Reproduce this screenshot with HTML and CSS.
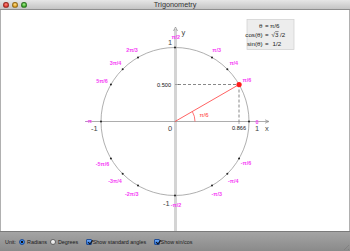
FILE: index.html
```html
<!DOCTYPE html>
<html>
<head>
<meta charset="utf-8">
<link rel="stylesheet" href="styles.css">
</head>
<body>
<div class="window">
  <div class="titlebar">
    <div class="lights">
      <span class="light red"></span>
      <span class="light yellow"></span>
      <span class="light green"></span>
    </div>
    <div class="title">Trigonometry</div>
  </div>
  <div class="canvas">
    <svg class="plot" width="350" height="221" viewBox="0 10 350 221">
      <rect x="0" y="10" width="350" height="221" fill="#fff"/>
      <line x1="0.5" y1="10" x2="0.5" y2="231" stroke="#b0b0b0"/>
      <line x1="349.5" y1="10" x2="349.5" y2="231" stroke="#b0b0b0"/>
      <!-- y axis -->
      <rect x="174" y="29" width="3" height="202" fill="#d4d4d4"/>
      <path d="M175.5 27 L173.5 31 M175.5 27 L177.5 31" stroke="#777" stroke-width="0.6" fill="none"/>
      <!-- x axis -->
      <line x1="85" y1="121.5" x2="268" y2="121.5" stroke="#8a8a8a" stroke-width="0.7"/>
      <path d="M269 121.5 L265 119.8 M269 121.5 L265 123.2" stroke="#777" stroke-width="0.6" fill="none"/>
      <!-- circle -->
      <circle cx="175" cy="121.5" r="74" fill="none" stroke="#9a9a9a" stroke-width="0.8"/>
      <!-- ticks -->
      <line x1="175" y1="84.5" x2="179" y2="84.5" stroke="#777" stroke-width="0.6"/>
      <line x1="239" y1="121.5" x2="239" y2="124" stroke="#777" stroke-width="0.6"/>
      <!-- dashed projection -->
      <line x1="178" y1="84.5" x2="239" y2="84.5" stroke="#555" stroke-width="0.7" stroke-dasharray="3 2"/>
      <line x1="239" y1="84.5" x2="239" y2="121.5" stroke="#555" stroke-width="0.7" stroke-dasharray="3 2"/>
      <!-- angle line and arc -->
      <line x1="175" y1="121.5" x2="239.09" y2="84.5" stroke="#ff5050" stroke-width="0.9"/>
      <path d="M195 121.5 A20 20 0 0 0 192.32 111.5" fill="none" stroke="#ff5050" stroke-width="0.8"/>
      <text class="redlbl" x="204" y="117">π/6</text>
      <!-- dots -->
      <g fill="#222">
        <circle cx="249" cy="121.5" r="1"/>
        <circle cx="227.33" cy="69.17" r="1"/>
        <circle cx="212" cy="57.41" r="1"/>
        <circle cx="175" cy="47.5" r="1"/>
        <circle cx="138" cy="57.41" r="1"/>
        <circle cx="122.67" cy="69.17" r="1"/>
        <circle cx="110.91" cy="84.5" r="1"/>
        <circle cx="101" cy="121.5" r="1"/>
        <circle cx="110.91" cy="158.5" r="1"/>
        <circle cx="122.67" cy="173.83" r="1"/>
        <circle cx="138" cy="185.59" r="1"/>
        <circle cx="175" cy="195.5" r="1"/>
        <circle cx="212" cy="185.59" r="1"/>
        <circle cx="227.33" cy="173.83" r="1"/>
        <circle cx="239.09" cy="158.5" r="1"/>
      </g>
      <circle cx="239.09" cy="84.5" r="2.6" fill="#ff1a1a"/>
      <!-- axis labels -->
      <text class="axlbl" x="168" y="44.5">1</text>
      <text class="axlbl" x="181.5" y="35">y</text>
      <text class="axlbl" x="91" y="130.5">-1</text>
      <text class="axlbl" x="168" y="130.5">0</text>
      <text class="axlbl" x="255" y="130.5">1</text>
      <text class="axlbl" x="265" y="130.5">x</text>
      <text class="axlbl" x="163" y="206">-1</text>
      <text class="numlbl" x="239" y="129.5">0.866</text>
      <text class="numlbl" x="164" y="86.5">0.500</text>
      <!-- angle labels -->
      <g class="mag">
        <text x="246.9" y="80">π/6</text>
        <text x="233.7" y="63">π/4</text>
        <text x="216.6" y="50">π/3</text>
        <text x="175.8" y="37">π/2</text>
        <text x="132" y="49.5">2π/3</text>
        <text x="115.5" y="63">3π/4</text>
        <text x="102" y="80.5">5π/6</text>
        <text x="89" y="121">-π</text>
        <text x="102.5" y="163.8">-5π/6</text>
        <text x="115" y="181">-3π/4</text>
        <text x="131.7" y="194">-2π/3</text>
        <text x="176" y="205">-π/2</text>
        <text x="216.7" y="194">-π/3</text>
        <text x="233.3" y="181">-π/4</text>
        <text x="246" y="163.3">-π/6</text>
        <text x="257" y="121.5">0</text>
      </g>
      <!-- info box -->
      <rect x="247" y="19.5" width="47" height="30" fill="#ededed" stroke="#cfcfcf" stroke-width="0.7"/>
      <g class="info">
        <text class="r" x="262.5" y="28.3">θ</text>
        <text x="265" y="28.3">=</text>
        <text x="270" y="28.3">π/6</text>
        <text class="r" x="262.5" y="37">cos(θ)</text>
        <text x="265" y="37">=</text>
        <text x="271.5" y="37">√3 /2</text>
        <text class="r" x="262.5" y="45.8">sin(θ)</text>
        <text x="265" y="45.8">=</text>
        <text x="272.5" y="45.8">1/2</text>
      </g>
      <line x1="275.2" y1="31.6" x2="278.6" y2="31.6" stroke="#222" stroke-width="0.5"/>
    </svg>
  </div>
  <div class="statusbar">
    <span class="lbl">Unit:</span>
    <span class="radio on"></span><span class="lbl">Radians</span>
    <span class="radio"></span><span class="lbl">Degrees</span>
    <span class="check"></span><span class="lbl">Show standard angles</span>
    <span class="check"></span><span class="lbl">Show sin/cos</span>
    <span class="grip"></span>
  </div>
</div>
</body>
</html>
```
FILE: styles.css
```css
* { box-sizing: border-box; }
html, body { margin: 0; padding: 0; background: #fff; }
body { width: 350px; height: 251px; overflow: hidden; font-family: "Liberation Sans", Arial, sans-serif; }
.window { width: 350px; height: 251px; display: flex; flex-direction: column; }
.titlebar {
  height: 10px; flex: none; position: relative;
  background: linear-gradient(#e6e6e6, #c4c4c4);
  border-bottom: 1px solid #8e8e8e;
  display: flex; align-items: center; justify-content: center;
}
.lights { position: absolute; left: 3px; top: 2px; display: flex; gap: 3px; }
.light { width: 6px; height: 6px; border-radius: 50%; display: block; border: 0.5px solid rgba(0,0,0,0.35); }
.light.red { background: radial-gradient(circle at 50% 35%, #ff8a80, #e0382e 70%); }
.light.yellow { background: radial-gradient(circle at 50% 35%, #ffe08a, #dc9b1c 70%); }
.light.green { background: radial-gradient(circle at 50% 35%, #a6f08c, #3aa829 70%); }
.title { font-size: 7.3px; color: #333; line-height: 10px; padding-top: 1px; }
.canvas { flex: none; height: 221px; }
.plot { display: block; }
.plot text { font-family: "Liberation Sans", Arial, sans-serif; }
.axlbl { font-size: 7.5px; fill: #444; }
.numlbl { font-size: 5.6px; fill: #111; text-anchor: middle; }
.redlbl { font-size: 6px; fill: #ff3030; text-anchor: middle; }
.mag text { font-size: 5.4px; font-weight: bold; fill: #f53cf5; text-anchor: middle; dominant-baseline: central; }
.info text { font-size: 6.2px; fill: #222; }
.info text.r { text-anchor: end; }
.statusbar {
  flex: 1; position: relative;
  background: linear-gradient(#a4a4a4, #8a8a8a);
  border-top: 1px solid #7a7a7a;
  display: flex; align-items: center; padding-left: 5px; padding-top: 1px;
  font-size: 5.4px; color: #1a1a1a;
}
.lbl { margin-right: 2px; white-space: nowrap; }
.radio {
  width: 6px; height: 6px; border-radius: 50%; margin: 0 2px 0 1px;
  background: linear-gradient(#fff, #ddd); border: 0.5px solid #666; display: inline-block; flex: none;
}
.radio.on { background: radial-gradient(circle, #111 0 1.2px, #3d8ef0 1.5px, #1a5fc8 100%); border-color: #1e4e9a; }
.check {
  width: 5.5px; height: 5.5px; margin: 0 1px 0 6px; flex: none;
  background: linear-gradient(#6aa7f5, #2a6ed8); border: 0.5px solid #234f96; border-radius: 1px; position: relative;
}
.check::after {
  content: ""; position: absolute; left: 1.5px; top: -1px; width: 1.5px; height: 4px;
  border: solid #111; border-width: 0 1px 1px 0; transform: rotate(40deg);
}
.grip {
  position: absolute; right: 1px; bottom: 1px; width: 8px; height: 8px;
  background: repeating-linear-gradient(135deg, transparent 0 1.5px, #777 1.5px 2.2px, transparent 2.2px 3px);
  clip-path: polygon(100% 0, 100% 100%, 0 100%);
  opacity: 0.6;
}
```
